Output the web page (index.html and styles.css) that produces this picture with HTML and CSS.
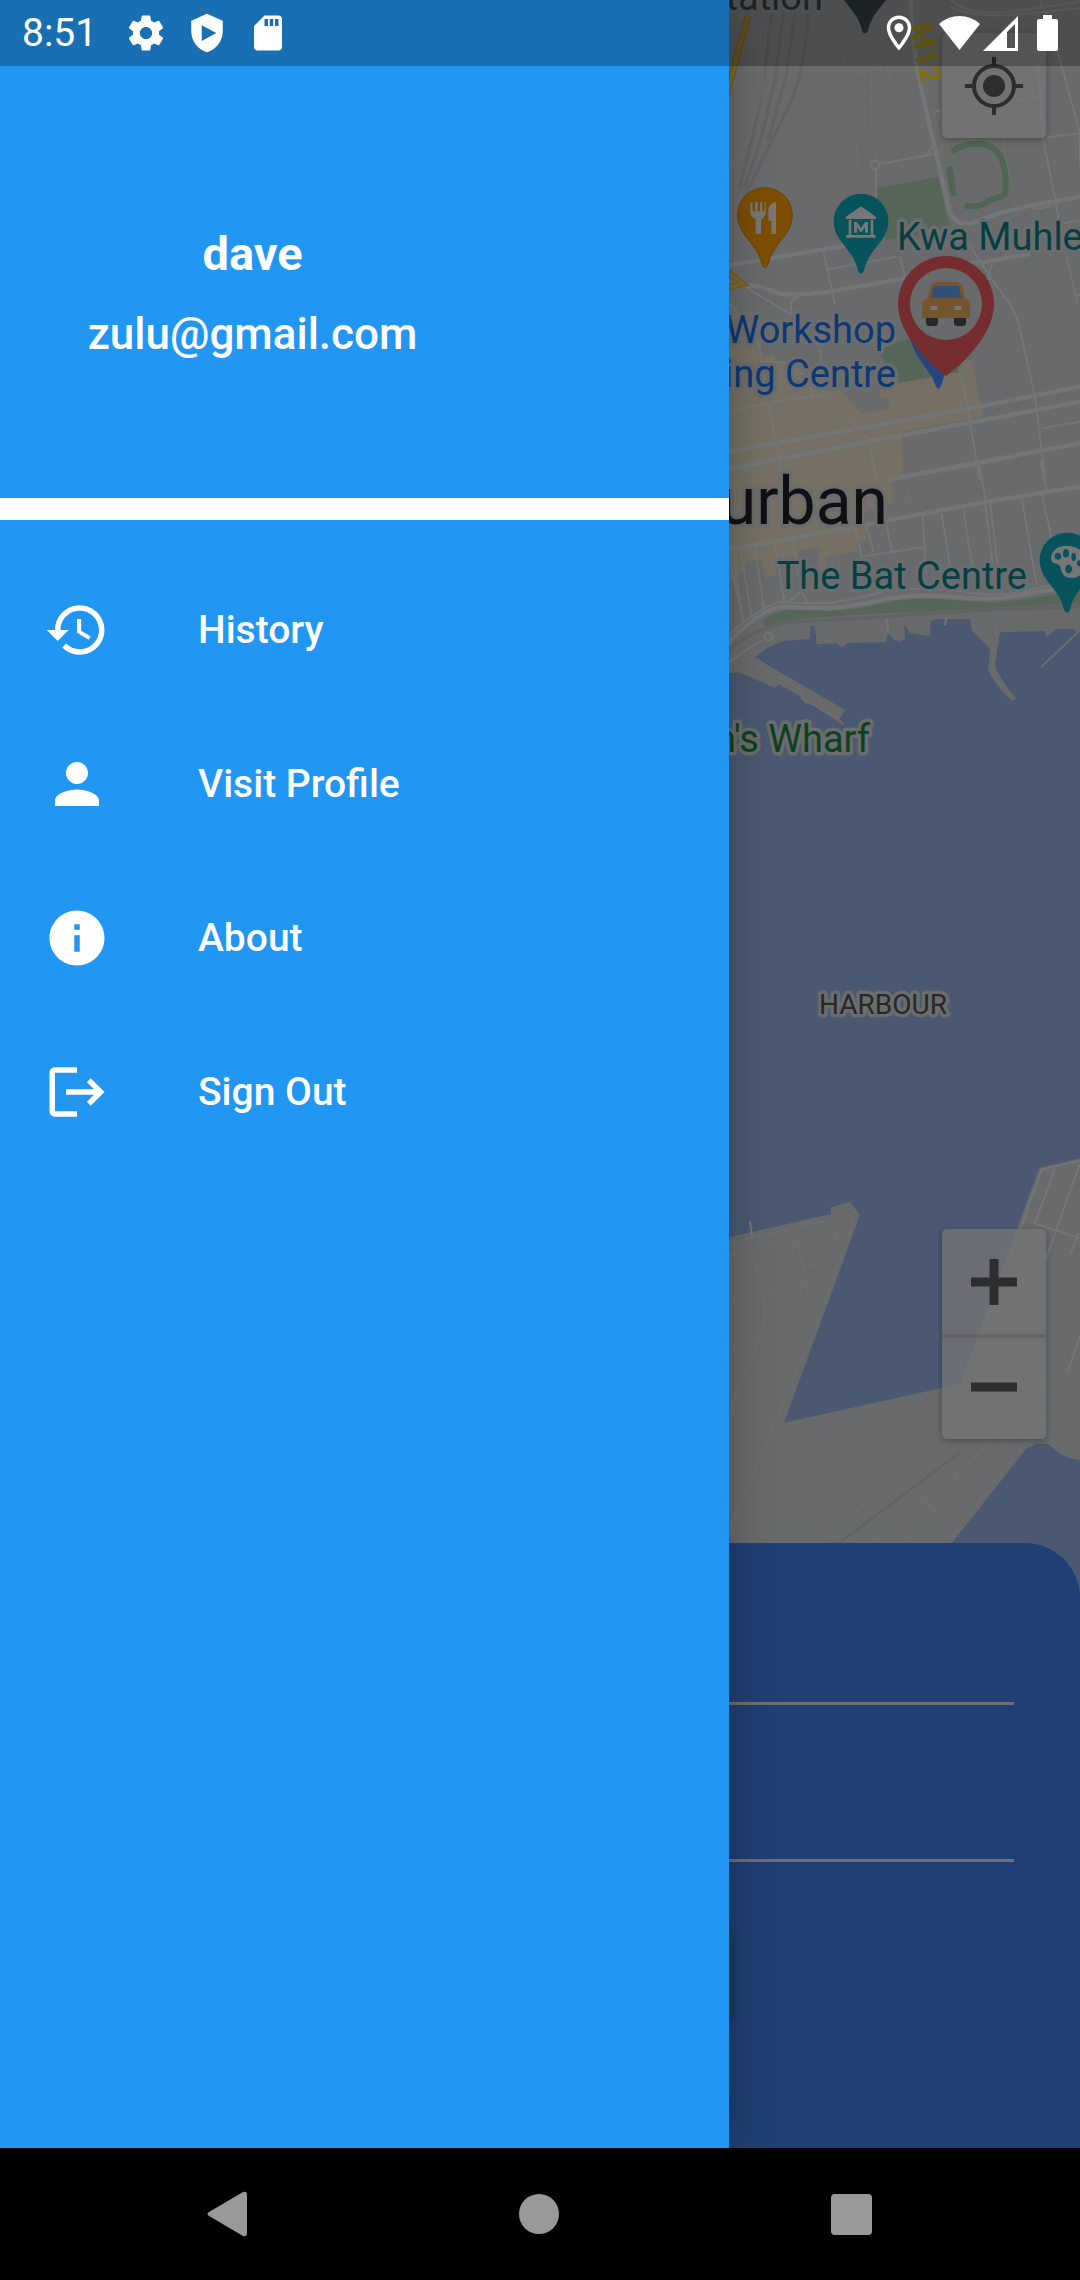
FILE: index.html
```html
<!DOCTYPE html>
<html lang="en">
<head>
<meta charset="utf-8">
<meta name="viewport" content="width=device-width, initial-scale=1">
<title>Navigation drawer</title>
<link rel="stylesheet" href="styles.css">
</head>
<body>
<div class="screen">
  <div class="app">
    <main class="home">
      <svg class="map" viewBox="0 0 1080 2148" preserveAspectRatio="xMaxYMin slice" role="img" aria-label="Map of Durban">
        <defs>
          <path id="pin" d="M0 157C-8 157-10 145-12 138C-25 85-82 60-82 0A82 82 0 1 1 82 0C82 60 25 85 12 138C10 145 8 157 0 157Z"/>
        </defs>
        <rect class="land" width="1080" height="2148"/>

        <!-- city centre and parks -->
        <g transform="translate(720 240) scale(.33333)">
          <path class="tan" d="M0 225L110 215L125 350L165 345L165 365L225 365L275 440L365 455L425 520L510 508L505 480L475 470L480 450L540 425L720 395L725 360L755 360L790 530L545 575L550 705L515 730L520 790L435 810L440 900L410 905L415 935L315 950L320 990L295 985L300 920L235 930L235 970L170 975L170 1005L135 1015L125 960L80 965L50 1025L0 1030Z"/>
          <path class="land" d="M370 455L425 520L510 508L505 480L475 470L480 435Z"/>
          <path class="park" d="M480 345L490 320L575 295L660 400L720 370L720 395L540 428Z"/>
        </g>
        <g transform="translate(720 0) scale(.33333)">
          <path class="park" d="M470 565L655 530L690 690L500 720L470 640ZM495 700h30v5h-30z"/>
          <g class="stadium">
            <path d="M697 455Q740 422 800 435Q850 455 855 520Q860 560 852 590"/>
            <path d="M687 502L702 587"/>
            <path d="M735 617Q780 625 810 600L850 588"/>
          </g>
        </g>

        <!-- harbour -->
        <g transform="translate(720 460) scale(.33333)">
          <path class="park" d="M130 485Q150 455 210 450L330 452Q420 450 480 432Q560 412 660 418L820 428Q960 415 1080 390V432L860 440L600 456L390 465L230 478L135 503Z"/>
          <path class="water" d="M0 638H60L110 660L165 684L175 672L240 708L255 730L278 736L368 795L372 790L358 778L375 750L105 592L140 565L190 543L270 537L272 495L285 500L290 553L350 550L370 562L382 548L500 547L503 515L525 543L555 540L553 490L570 520L630 528L632 485L650 477H750L755 510L810 565L805 630Q820 670 875 722L888 715Q840 660 825 615L840 517L975 513L978 533L1010 507H1060L1070 515L960 620L965 624L1080 515V3600H0Z"/>
        </g>
        <g transform="translate(720 1100) scale(.33333)">
          <path class="land" d="M0 418L333 342V322L390 305L420 345L192 968L720 852L805 620L958 203L1080 175V1080L1050 1075Q1010 1060 985 1032L950 1032L920 1045L695 1330V1400H0Z"/>
        </g>

        <!-- railways -->
        <g class="rail" transform="translate(720 0) scale(.33333)">
          <path d="M160 0L130 250L100 400L60 560"/>
          <path d="M195 0L165 240L125 410L75 560"/>
          <path d="M230 0L200 220L145 420"/>
          <path d="M265 0Q265 200 200 330L60 620"/>
        </g>
        <g transform="translate(720 460) scale(.33333)">
          <path class="rail" d="M0 590Q100 500 210 487L400 475L830 448L1080 440"/>
        </g>
        <g transform="translate(720 1100) scale(.33333)">
          <path class="rail thin" d="M720 1057L350 1335"/>
        </g>

        <!-- roads -->
        <g class="road" transform="translate(720 0) scale(.33333)">
          <path class="wide" d="M572 0Q575 130 600 250L690 640Q710 680 760 668Q850 630 980 608L1080 590"/>
          <path d="M692 0Q750 50 870 35L1080 5M690 20Q760 55 880 45L1080 25M960 0Q1000 90 1020 180L1080 400M640 335L955 292M980 412L1080 400M1080 400V500M970 420L1005 595L1022 690M955 180Q960 330 970 420M1000 600Q990 630 940 625"/>
          <path d="M480 492L640 462L620 465L638 440M468 510V600M1022 672L1080 660"/>
          <circle cx="465" cy="494" r="13"/>
          <path class="faint" d="M120 90L130 250Q110 350 70 450Q60 480 27 490M370 150Q360 220 420 222L600 175M500 185Q500 230 525 258M470 405L472 480M890 300L855 370L850 430L887 622M90 60L160 85M410 430L415 560M455 220V400"/>
        </g>
        <g class="road" transform="translate(720 240) scale(.33333)">
          <path class="wide" d="M0 80L330 25L480 0M60 138Q110 130 160 155Q200 172 330 155L555 115M740 70L800 65L930 42M0 640L165 610L740 507L1080 440M0 690L180 657L445 605L750 548L1080 485M520 715L770 668L1080 610"/>
          <path d="M740 0Q820 130 862 180Q890 220 900 270L945 470L975 715M310 35L345 195M325 88L530 50M75 140L215 225M220 225Q200 180 235 170M27 190L60 225M110 230L122 350M27 515L150 487L320 465M145 490L178 657L182 720M325 460Q330 485 360 510L445 600L468 720M300 330L305 370M120 365L190 367Q260 400 275 440V470M715 380L735 460Q735 490 705 500M735 460L780 720M540 50L555 110M820 70Q805 85 808 120M1040 50L1072 190M1070 165H1080M965 565L1080 545"/>
          <path class="faint" d="M80 690L88 720M348 640L355 720M840 145Q880 150 865 175M90 30V60"/>
        </g>
        <g class="road" transform="translate(720 460) scale(.33333)">
          <path class="wide" d="M0 35L165 0M500 60L880 -10M0 150L60 140M0 272L220 235L800 125L1080 80"/>
          <path class="wide" d="M0 575Q100 460 180 440Q260 445 330 444Q400 440 480 420Q580 400 700 410Q800 425 900 405L1080 375"/>
          <path d="M0 550Q100 450 180 425Q260 432 330 428Q420 415 500 392Q620 378 760 400Q850 412 950 385L1080 360"/>
          <path d="M40 275L70 490M62 273L95 470M105 265L132 445M165 250L192 420M215 225L245 390M240 390Q240 410 200 425M245 390Q250 410 268 430M405 205L425 290L615 260M440 200L460 275M500 195L515 270M608 170L618 340M665 160L690 320M730 148L760 340M795 125L825 370L850 410M810 125L835 330M905 112L950 375M965 100L1000 260M775 0L798 125M960 0L980 90M460 0L470 60M27 285L75 510M500 475L505 520M680 470L675 495M27 608L70 575L130 540"/>
          <circle cx="146" cy="530" r="12"/>
          <path class="faint" d="M555 60L575 130M520 90L560 110L525 150M70 578Q90 610 130 625L245 690V715L290 740L360 775M415 480L418 525M535 475L540 545M838 455L825 525M80 30L90 100M285 230L300 320M345 220L360 330M1040 165L1080 155"/>
        </g>
        <g class="road" transform="translate(720 1100) scale(.33333)">
          <path d="M90 363L97 412M1080 182L965 208L890 420M1005 205L945 370L1080 415M1080 190L975 485M1075 400L1050 465M1080 705L1045 810"/>
          <path class="faint" d="M27 430L380 346Q400 345 397 370L280 700L150 1000L50 1240L27 1300M27 468L345 397L380 415M352 405L325 480Q300 492 248 502M232 420L265 585M27 598L260 547M97 452L125 580Q145 640 130 670L110 735L30 745M110 735L27 940M890 420L845 530M925 400L835 670M1080 795L970 850Q900 890 850 970L790 1050L460 1330M300 1330L395 1255Q410 1230 430 1215L690 1030Q720 1000 720 970L708 910M1080 905Q1030 910 980 950L780 1200L680 1325M850 970L915 1015M885 990Q870 1030 805 1068Q820 1090 815 1110Q760 1200 695 1250M615 1205L640 1230L678 1260L662 1285M715 1120Q710 1150 640 1230L560 1328M985 1015Q1030 1050 1080 1052M1070 905V930"/>
        </g>
        <g class="highway" transform="translate(720 0) scale(.33333)">
          <path class="highway-edge" d="M84 48L18 290"/>
          <path d="M84 48L18 290"/>
          <path class="highway-edge" d="M10 805L68 852L10 866"/>
          <path d="M10 805L68 852L10 866"/>
        </g>

        <!-- place pins -->
        <g transform="translate(720 0) scale(.33333)">
          <use href="#pin" x="435" y="-57" fill="#262f33"/>
          <use href="#pin" class="food" x="135" y="645"/>
          <g fill="#777">
            <path d="M91 606h7v28h7v-28h8v28h7v-28h7v28h7v-28h3v30q0 16-14 22v44h-16v-44q-16-6-16-22z"/>
            <path d="M168 606v96h-14v-40h-9v-28q0-24 23-28z"/>
          </g>
          <use href="#pin" class="culture" x="423" y="663"/>
          <path fill="#777" fill-rule="evenodd" d="M423 619L468 650V657H378V650ZM386 659H460V705H467V713H378V705H386ZM394 659V705H452V659ZM402 698V666H411L423 684L435 666H444V698H435V682L426 695H420L411 682V698Z"/>
        </g>
        <g transform="translate(720 460) scale(.33333)">
          <use href="#pin" class="culture" x="1041" y="300"/>
          <path fill="#777" d="M993 295C993 270 1015 257 1042 257Q1090 260 1100 300Q1100 345 1060 354Q1025 356 1022 325Q1020 313 1010 312Q993 310 993 295Z"/>
          <g class="culture">
            <circle cx="1014" cy="289" r="10"/><ellipse cx="1038" cy="280" rx="9" ry="13"/><ellipse cx="1061" cy="291" rx="7" ry="12"/><ellipse cx="1046" cy="327" rx="10" ry="13"/><ellipse cx="1077" cy="310" rx="6" ry="9"/>
          </g>
        </g>

        <g class="labels">
          <text class="l-slate" x="823" y="10" text-anchor="end">Station</text>
          <text class="l-road" transform="translate(910 25) rotate(79)">M12</text>
          <text class="l-teal" x="897" y="250">Kwa Muhle</text>
          <text class="l-blue" x="896" y="343" text-anchor="end">Workshop</text>
          <text class="l-blue" x="896" y="387" text-anchor="end">Shopping Centre</text>
          <text class="l-city" x="888" y="524" text-anchor="end">Durban</text>
          <text class="l-teal" x="1027" y="589" text-anchor="end">The Bat Centre</text>
          <text class="l-green" x="870" y="752" text-anchor="end">Wilson's Wharf</text>
          <text class="l-small" x="883" y="1014" text-anchor="middle">HARBOUR</text>
        </g>

        <!-- car marker -->
        <g transform="translate(720 240) scale(.33333)">
          <path fill="#264580" d="M572 295C580 350 635 395 645 432Q655 460 665 432L675 400Z"/>
          <path fill="#752c2f" d="M678 408C640 380 534 290 534 192A144 144 0 0 1 822 192C822 290 716 380 678 408Z"/>
          <circle cx="678" cy="192" r="108" fill="#696a6c"/>
          <path fill="#25282a" d="M618 230h36v18q0 10-10 10h-16q-10 0-10-10zM702 230h36v18q0 10-10 10h-16q-10 0-10-10z"/>
          <path fill="#74552d" d="M650 126H706Q724 126 728 142L736 176Q750 180 750 194V228Q750 234 744 234H612Q606 234 606 228V194Q606 180 622 176L630 142Q634 126 650 126Z"/>
          <path fill="#2f5079" d="M646 138H712Q716 138 717 142L724 174H632L640 142Q641 138 646 138Z"/>
          <rect fill="#777" x="630" y="198" width="24" height="12" rx="6"/><rect fill="#777" x="702" y="198" width="24" height="12" rx="6"/>
        </g>
      </svg>

      <div class="controls">
        <button class="control" type="button" aria-label="My location">
          <svg viewBox="0 0 60 60" width="60" height="60"><circle cx="30" cy="30" r="20" fill="none" stroke="currentColor" stroke-width="4"/><circle cx="30" cy="30" r="11" fill="currentColor"/><path d="M30 1v10M30 49v10M1 30h10M49 30h10" stroke="currentColor" stroke-width="4"/></svg>
        </button>
        <div class="zoom">
          <button class="zoom-button" type="button" aria-label="Zoom in">
            <svg viewBox="0 0 46 46" width="46" height="46"><path d="M0 23h46M23 0v46" stroke="currentColor" stroke-width="9"/></svg>
          </button>
          <button class="zoom-button" type="button" aria-label="Zoom out">
            <svg viewBox="0 0 46 46" width="46" height="46"><path d="M0 23h46" stroke="currentColor" stroke-width="9"/></svg>
          </button>
        </div>
      </div>

      <form class="sheet">
        <input class="field" type="text" aria-label="Pick up">
        <input class="field" type="text" aria-label="Destination">
        <button class="submit" type="button" aria-label="Request"></button>
      </form>
    </main>

    <aside class="drawer">
      <header class="account">
        <h1 class="name">dave</h1>
        <p class="email">zulu@gmail.com</p>
      </header>
      <nav class="menu">
        <a class="item" href="#history">
          <svg class="icon" viewBox="0 0 24 24"><path d="M13 3c-4.970 0-9 4.030-9 9H1l3.890 3.890.07.14L9 12H6c0-3.870 3.130-7 7-7s7 3.130 7 7-3.130 7-7 7c-1.930 0-3.680-.79-4.940-2.060l-1.420 1.420C8.270 19.990 10.510 21 13 21c4.970 0 9-4.030 9-9s-4.030-9-9-9zm-1 5v5l4.280 2.540.72-1.210-3.500-2.080V8H12z"/></svg>
          History
        </a>
        <a class="item" href="#profile">
          <svg class="icon" viewBox="0 0 24 24"><path d="M12 12c2.210 0 4-1.790 4-4s-1.790-4-4-4-4 1.790-4 4 1.790 4 4 4zm0 2c-2.670 0-8 1.340-8 4v2h16v-2c0-2.660-5.330-4-8-4z"/></svg>
          Visit Profile
        </a>
        <a class="item" href="#about">
          <svg class="icon" viewBox="0 0 24 24"><path d="M12 2C6.480 2 2 6.480 2 12s4.480 10 10 10 10-4.480 10-10S17.520 2 12 2zm1 15h-2v-6h2v6zm0-8h-2V7h2v2z"/></svg>
          About
        </a>
        <a class="item" href="#sign-out">
          <svg class="icon" viewBox="0 0 24 24"><path d="M17 7l-1.410 1.410L18.170 11H8v2h10.170l-2.580 2.580L17 17l5-5zM4 5h8V3H4c-1.100 0-2 .9-2 2v14c0 1.100.9 2 2 2h8v-2H4V5z"/></svg>
          Sign Out
        </a>
      </nav>
    </aside>

    <div class="status">
      <span class="clock">8:51</span>
      <div class="status-group">
        <svg class="status-icon" viewBox="0 0 24 24"><path d="M19.430 12.980c.04-.32.07-.64.07-.98s-.03-.66-.07-.98l2.110-1.650c.19-.15.24-.42.12-.64l-2-3.460c-.12-.22-.39-.3-.61-.22l-2.490 1c-.52-.4-1.080-.73-1.690-.98l-.38-2.650C14.460 2.180 14.250 2 14 2h-4c-.25 0-.46.18-.49.42l-.38 2.650c-.61.25-1.170.59-1.690.98l-2.490-1c-.23-.09-.49 0-.61.22l-2 3.460c-.13.22-.07.49.12.64l2.110 1.650c-.04.32-.07.65-.07.98s.03.66.07.98l-2.110 1.650c-.19.15-.24.42-.12.64l2 3.460c.12.22.39.3.61.22l2.490-1c.52.4 1.080.73 1.690.98l.38 2.650c.03.24.24.42.49.42h4c.25 0 .46-.18.49-.42l.38-2.650c.61-.25 1.170-.59 1.690-.98l2.490 1c.23.09.49 0 .61-.22l2-3.460c.12-.22.07-.49-.12-.64l-2.110-1.650zM12 15.500c-1.930 0-3.500-1.570-3.500-3.500s1.570-3.500 3.500-3.500 3.500 1.570 3.500 3.500-1.570 3.500-3.500 3.500z"/></svg>
        <svg class="status-icon" viewBox="0 0 24 24"><path fill-rule="evenodd" d="M12 1L3 5v6c0 5.500 3.800 10.500 9 12 5.200-1.500 9-6.500 9-12V5zM9 7.500l8.300 4.500L9 16.500z"/></svg>
        <svg class="status-icon" viewBox="0 0 24 24"><path d="M18 2h-8L4 8v12c0 1.100.9 2 2 2h12c1.100 0 2-.9 2-2V4c0-1.100-.9-2-2-2zm-6 6h-2V4h2v4zm3 0h-2V4h2v4zm3 0h-2V4h2v4z"/></svg>
      </div>
      <div class="status-group status-end">
        <svg class="status-icon" viewBox="0 0 24 24"><path d="M12 2C8.130 2 5 5.130 5 9c0 5.250 7 13 7 13s7-7.750 7-13c0-3.870-3.130-7-7-7zM7 9c0-2.760 2.240-5 5-5s5 2.240 5 5c0 2.880-2.880 7.190-5 9.880C9.920 16.210 7 11.850 7 9z"/><circle cx="12" cy="9" r="2.600"/></svg>
        <div class="signals">
          <svg width="41" height="36" viewBox="0 0 41 36"><path d="M20.500 35L0 9Q9 1 20.500 1T41 9z"/></svg>
          <svg width="35" height="36" viewBox="0 0 35 36"><path fill-rule="evenodd" d="M35 1V36H0zM24 17V33H32V9z"/></svg>
        </div>
        <svg width="21" height="36" viewBox="0 0 21 36"><path d="M6 0h9v4h4q2 0 2 2v28q0 2-2 2H2q-2 0-2-2V6q0-2 2-2h4z"/></svg>
      </div>
    </div>
  </div>

  <div class="system-nav">
    <button class="system-button" type="button" aria-label="Back"><svg width="45" height="46" viewBox="0 0 45 46"><path d="M4 21L38 1q4-1 4 3v38q0 4-4 3L4 25q-3-2 0-4z"/></svg></button>
    <button class="system-button" type="button" aria-label="Home"><svg width="40" height="40" viewBox="0 0 40 40"><circle cx="20" cy="20" r="20"/></svg></button>
    <button class="system-button" type="button" aria-label="Recent apps"><svg width="41" height="41" viewBox="0 0 41 41"><rect width="41" height="41" rx="4"/></svg></button>
  </div>
</div>
</body>
</html>
```
FILE: styles.css
```css
* { box-sizing: border-box; }

body {
  margin: 0;
  font-family: Roboto, "Liberation Sans", sans-serif;
  background: #000;
}

button, input { font: inherit; border: 0; padding: 0; }
svg { display: block; }

.screen {
  display: flex;
  flex-direction: column;
  min-height: 100vh;
}

.app {
  flex: 1;
  display: grid;
  grid-template: 1fr / 100%;
  overflow: hidden;
}

.home, .drawer, .status { grid-area: 1 / 1; }

/* Home screen, dimmed behind the drawer */
.home {
  position: relative;
  display: flex;
  flex-direction: column;
}

.map {
  position: absolute;
  inset: 0;
  width: 100%;
  height: 100%;
}

.land { fill: #696a6b; }
.water { fill: #4a5971; }
.park { fill: #556658; }
.tan { fill: #757063; }
.food { fill: #7d4e00; stroke: #6c4300; stroke-width: 3; }
.culture { fill: #07535c; }
.stadium { fill: none; stroke: #4e6551; stroke-width: 18; }
.rail { fill: none; stroke: #626365; stroke-width: 10; }
.rail.thin { stroke-width: 7; }
.road { fill: none; stroke: #747576; stroke-width: 6; }
.road .wide { stroke-width: 13; }
.road .faint { stroke: #6e6f70; stroke-width: 4; }
.highway { fill: none; stroke: #7a682f; stroke-width: 13; }
.highway-edge { stroke: #795a12; stroke-width: 19; }

.labels {
  font-size: 38px;
  stroke: #6b6c6d;
  stroke-width: 7px;
  stroke-linejoin: round;
  paint-order: stroke;
}
.l-slate { fill: #262f38; }
.l-teal { fill: #063f43; }
.l-blue { fill: #0d3872; }
.l-green { fill: #0c421c; }
.l-city { fill: #101012; font-size: 66px; }
.l-small { fill: #27282a; font-size: 28px; }
.l-road { fill: #80700f; font-size: 30px; font-weight: 700; stroke: none; }

.controls {
  position: relative;
  flex: 1;
  display: flex;
  flex-direction: column;
  align-items: flex-end;
  justify-content: space-between;
  padding: 33px 34px 104px;
}

.control, .zoom {
  width: 104px;
  border-radius: 5px;
  background: rgba(118, 118, 118, .75);
  box-shadow: 0 2px 6px rgba(0, 0, 0, .3);
}

.control, .zoom-button {
  display: grid;
  place-items: center;
  height: 105px;
  color: #2e2e2e;
}

.zoom-button { width: 100%; background: none; }
.zoom-button + .zoom-button { box-shadow: inset 0 4px rgba(90, 90, 90, .5); }

.sheet {
  position: relative;
  display: flex;
  flex-direction: column;
  align-items: center;
  padding: 50px 66px 130px;
  border-radius: 55px 55px 0 0;
  background: #203f74;
}

.field {
  width: 100%;
  height: 112px;
  border-bottom: 3px solid #707070;
  background: none;
}
.field + .field { margin-top: 45px; }

.submit {
  width: 384px;
  height: 92px;
  margin-top: 64px;
  border-radius: 8px;
  background: #1d4b24;
  box-shadow: 0 4px 6px rgba(0, 0, 0, .3);
}

/* Drawer */
.drawer {
  position: relative;
  width: 67.5%;
  color: #fff;
  background: #2196f3;
  box-shadow: 0 0 44px rgba(0, 0, 0, .28);
}

.account {
  display: flex;
  flex-direction: column;
  align-items: center;
  gap: 24px;
  height: 520px;
  padding: 226px 224px 0 0;
  border-bottom: 22px solid #fff;
}

.name, .email { margin: 0; line-height: 56px; }
.name { font-size: 47px; font-weight: 700; }
.email { font-size: 44px; font-weight: 500; }

.menu { padding-top: 33px; }

.item {
  display: flex;
  align-items: center;
  gap: 88px;
  height: 154px;
  padding: 0 44px;
  font-size: 39px;
  font-weight: 500;
  color: inherit;
  text-decoration: none;
}

.icon { width: 66px; height: 66px; fill: currentColor; }

/* System bars */
.status {
  position: relative;
  align-self: start;
  display: flex;
  align-items: center;
  height: 66px;
  padding: 0 22px;
  color: #fff;
  fill: #fff;
  background: rgba(0, 0, 0, .26);
}

.clock { width: 103px; font-size: 39px; }
.status-group { display: flex; align-items: center; gap: 19px; }
.status-end { margin-left: auto; }
.status-icon { width: 42px; height: 42px; }
.signals { display: flex; gap: 3px; }

.system-nav {
  display: flex;
  height: 132px;
  padding: 0 73px 0 71px;
  background: #000;
}

.system-button {
  flex: 1;
  display: grid;
  place-items: center;
  background: none;
  fill: #999;
}
```
